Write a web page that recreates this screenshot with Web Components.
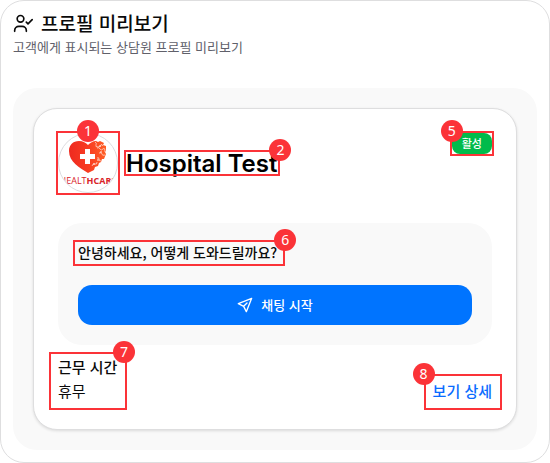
<!DOCTYPE html>
<html lang="ko">
<head>
<meta charset="utf-8">
<title>프로필 미리보기</title>
<style>
  html, body { margin: 0; background: #fff; }
  body { font-family: "Noto Sans CJK KR", sans-serif; color: #0a0a0a; }
</style>
</head>
<body>
<profile-preview></profile-preview>
<script>
const define = (name, html) => {
  const template = document.createElement('template');
  template.innerHTML = html;
  customElements.define(name, class extends HTMLElement {
    constructor() {
      super();
      this.attachShadow({ mode: 'open' }).append(template.content.cloneNode(true));
      const number = this.shadowRoot.querySelector('.number');
      if (number) number.textContent = this.getAttribute('number');
    }
  });
};

define('call-out', `
<style>
  :host { display: block; position: relative; width: fit-content; }
  .frame { position: absolute; inset: var(--frame, 0); border: 2px solid #fb3338; pointer-events: none; }
  .number { position: absolute; top: -13px; left: var(--at, calc(100% + 2px)); margin-left: -11px; width: 22px; height: 22px;
    border-radius: 50%; background: #fb3338; color: #fff; font: 400 14px/22px "Noto Sans", sans-serif; text-align: center; }
</style>
<slot></slot><div class="frame"><span class="number"></span></div>`);

define('health-logo', `
<style>
  :host { display: block; width: 60px; height: 60px; }
  svg { display: block; }
</style>
<svg width="60" height="60" viewBox="0 0 60 60" role="img" aria-label="Healthcare">
  <defs>
    <clipPath id="c"><circle cx="30" cy="30" r="29"/></clipPath>
    <linearGradient id="g"><stop offset="0" stop-color="#ee2a20"/><stop offset=".5" stop-color="#f83b22"/><stop offset="1" stop-color="#ff5f25"/></linearGradient>
  </defs>
  <circle cx="30" cy="30" r="29.5" fill="#fff" stroke="#dcdce0"/>
  <g clip-path="url(#c)">
    <path fill="url(#g)" d="M30 40C22 35 11 29 11 18C11 12 15 8 21 8C25 8 28 10 30 12C32 10 35 8 38 8L40 9L42 8L46 10L45 12L48 13L48 18L47 19L48 21L46 26L44 26L43 29L41 30L40 33L37 34L36 37Z"/>
    <path fill="none" stroke="#fff" stroke-width=".6" d="M37 9q2 1 1 3t2 2t3-2t2 1M39 15q2-1 3 1t3 0t2 3M41 20q3-1 3 1t3 1M39 25q2-1 2 1t2 2M34 33q1-3 3-2t2-2"/>
    <g fill="#fff"><circle cx="42" cy="13" r=".8"/><circle cx="43" cy="19" r=".8"/><circle cx="40" cy="27" r=".8"/><circle cx="36" cy="31" r=".8"/></g>
    <path fill="#fff" d="M27 16h5v5h5v5h-5v5h-5v-5h-5v-5h5z"/>
    <text x="30" y="51" text-anchor="middle" fill="#d9232a" font-family="Open Sans, sans-serif" font-size="9">HEALT<tspan font-weight="700">HCARE</tspan></text>
  </g>
</svg>`);

define('status-badge', `
<style>
  :host { display: block; padding: 0 10px; border-radius: 8px; background: #00bb4b; color: #fff; font-size: 11px; line-height: 21px; font-weight: 500; }
</style><slot></slot>`);

define('chat-box', `
<style>
  :host { display: block; padding: 19px 20px 20px; border-radius: 24px; background: #f9f9f9; }
  p { margin: 0; font-size: 14px; line-height: 20px; font-weight: 500; }
  call-out { --frame: -2px -8px -4px -5px; }
  button { display: flex; align-items: center; justify-content: center; gap: 8px; width: 100%; height: 40px; margin-top: 23px; padding: 0;
    border: 0; border-radius: 14px; background: #0074ff; color: #fff; font: 500 13px/20px "Noto Sans CJK KR", sans-serif; }
</style>
<call-out number="6"><p><slot></slot></p></call-out>
<button type="button">
  <svg width="16" height="16" viewBox="0 0 24 24" fill="none" stroke="#fff" stroke-width="2" stroke-linecap="round" stroke-linejoin="round" aria-hidden="true"><path d="M22 2 2 10l8 4 4 8zM10 14l5-5"/></svg>
  채팅 시작
</button>`);

define('agent-card', `
<style>
  :host { display: block; padding: 24px 24px 26px; border: 1px solid #dededf; border-radius: 24px; background: #fff; box-shadow: 0 1px 3px rgb(0 0 0 / .12); }
  header { display: flex; align-items: flex-start; gap: 8px; }
  .logo { --frame: -2px; --at: 50%; }
  .name { --frame: 1px -3px 3px -2px; margin-top: 16px; }
  h2 { margin: 0; color: #000; font-family: Inter, sans-serif; font-size: 24px; line-height: 30px; font-weight: 600; }
  .status { --frame: -2px; --at: 0%; margin-left: auto; }
  chat-box { margin-top: 30px; }
  footer { display: flex; justify-content: space-between; align-items: flex-end; margin-top: 10px; }
  .hours { --frame: -3px -10px -7px -9px; --at: 73px; }
  h3, p { margin: 0; font-size: 15px; line-height: 24px; font-weight: 500; }
  p { font-weight: 400; }
  .more { --frame: -5px -10px -7px -9px; --at: -2px; }
  a { display: block; color: #0a6cff; font-size: 15px; line-height: 24px; font-weight: 500; text-decoration: none; }
</style>
<header>
  <call-out class="logo" number="1"><health-logo></health-logo></call-out>
  <call-out class="name" number="2"><h2>Hospital Test</h2></call-out>
  <call-out class="status" number="5"><status-badge>활성</status-badge></call-out>
</header>
<chat-box>안녕하세요, 어떻게 도와드릴까요?</chat-box>
<footer>
  <call-out class="hours" number="7"><h3>근무 시간</h3><p>휴무</p></call-out>
  <call-out class="more" number="8"><a href="#detail">보기 상세</a></call-out>
</footer>`);

define('profile-preview', `
<style>
  :host { display: block; padding: 12px; border: 1px solid #dededf; border-radius: 24px; background: #fff; }
  h1 { display: flex; align-items: center; gap: 8px; margin: 0; font-size: 19px; line-height: 20px; font-weight: 500; }
  p { margin: 4px 0 0; color: #60606a; font-size: 13px; line-height: 20px; }
  section { margin-top: 31px; padding: 20px; border-radius: 24px; background: #f9f9f9; }
</style>
<h1><svg width="20" height="20" viewBox="0 0 24 24" fill="none" stroke="currentColor" stroke-width="2" stroke-linecap="round" stroke-linejoin="round" aria-hidden="true"><path d="M2 22v-1a5 5 0 0 1 5-5h4a5 5 0 0 1 5 5v1M16 11l2 2 5-5"/><circle cx="9" cy="7" r="4"/></svg>프로필 미리보기</h1>
<p>고객에게 표시되는 상담원 프로필 미리보기</p>
<section><agent-card></agent-card></section>`);
</script>
</body>
</html>
